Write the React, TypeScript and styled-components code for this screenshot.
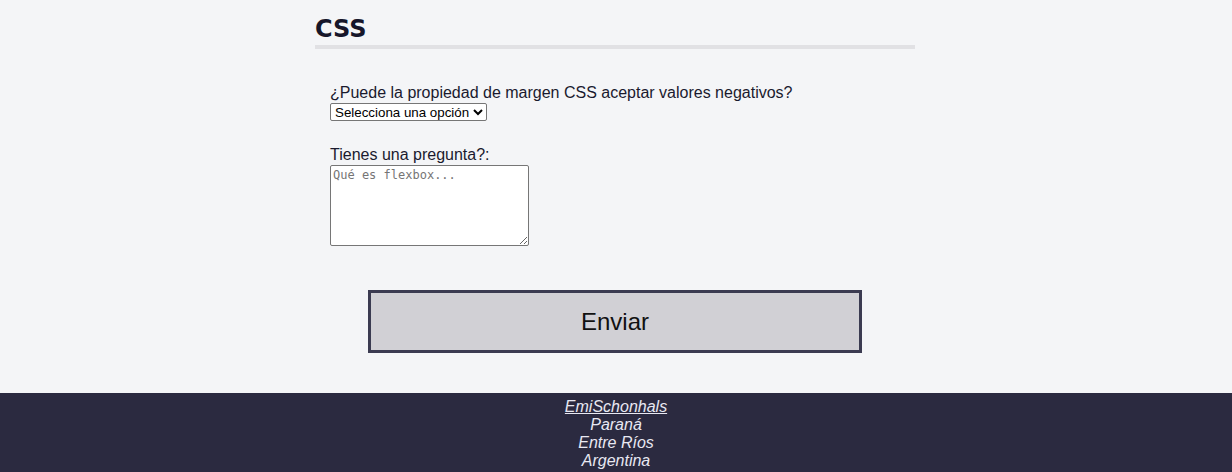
import React from "react";
import styled, { createGlobalStyle } from "styled-components";

const Global = createGlobalStyle`
  html, body { margin: 0; padding: 0; }
  body {
    background: #f4f5f7;
    font-family: "Liberation Sans", Arial, sans-serif;
    color: #1a1a2e;
  }
`;

const Page = styled.div`
  display: flex;
  flex-direction: column;
  min-height: 472px;
`;

const Main = styled.main`
  width: 600px;
  margin: 0 calc(50% - 299px) 0 calc(50% - 301px);
  padding-top: 13px;
  padding-bottom: 40px;
`;

const Heading = styled.h2`
  margin: 0;
  font-family: "DejaVu Sans", Verdana, sans-serif;
  font-weight: 700;
  font-size: 24px;
  line-height: 32px;
  color: #16162a;
  border-bottom: 4px solid #e1e1e4;
`;

const Form = styled.form`
  display: flex;
  flex-direction: column;
  padding: 35px 0 0 15px;
`;

const Field = styled.div<{ $gap: number }>`
  display: flex;
  flex-direction: column;
  align-items: flex-start;
  margin-bottom: ${(p) => p.$gap}px;
`;

const Label = styled.label`
  font-size: 16px;
  line-height: 18px;
  color: #1a1a2e;
`;

const Select = styled.select`
  font-family: "Liberation Sans", Arial, sans-serif;
  font-size: 13.33px;
  height: 18px;
  padding: 0;
  margin-top: 1px;
  border: 1px solid #767676;
  border-radius: 2px;
  background: #fff;
  color: #000;
`;

const TextArea = styled.textarea`
  width: 199px;
  height: 81px;
  box-sizing: border-box;
  margin-top: 1px;
  padding: 2px;
  font-family: "DejaVu Sans Mono", monospace;
  font-size: 12px;
  border: 1px solid #767676;
  border-radius: 2px;
  background: #fff;
  &::placeholder { color: #757575; }
`;

const Button = styled.button`
  align-self: center;
  margin-left: -15px;
  width: 494px;
  height: 63px;
  background: #d1d0d5;
  border: 3px solid #3b3b51;
  font-family: "Liberation Sans", Arial, sans-serif;
  font-size: 24px;
  color: #111;
  cursor: pointer;
`;

const Footer = styled.footer`
  background: #2b2a40;
  color: #e8e8f2;
  font-style: italic;
  font-size: 16px;
  line-height: 18px;
  text-align: center;
  padding: 5px 0 3px;
  display: flex;
  flex-direction: column;
`;

const FooterLink = styled.a`
  color: #e8e8f2;
  text-decoration: underline;
`;

export default function App() {
  return (
    <Page>
      <Global />
      <Main>
        <Heading>CSS</Heading>
        <Form onSubmit={(e) => e.preventDefault()}>
          <Field $gap={25}>
            <Label htmlFor="q1">¿Puede la propiedad de margen CSS aceptar valores negativos?</Label>
            <Select id="q1" defaultValue="">
              <option value="">Selecciona una opción</option>
              <option value="si">Sí</option>
              <option value="no">No</option>
            </Select>
          </Field>
          <Field $gap={44}>
            <Label htmlFor="q2">Tienes una pregunta?:</Label>
            <TextArea id="q2" placeholder="Qué es flexbox..." />
          </Field>
          <Button type="submit">Enviar</Button>
        </Form>
      </Main>
      <Footer>
        <div><FooterLink href="#">EmiSchonhals</FooterLink></div>
        <div>Paraná</div>
        <div>Entre Ríos</div>
        <div>Argentina</div>
      </Footer>
    </Page>
  );
}
